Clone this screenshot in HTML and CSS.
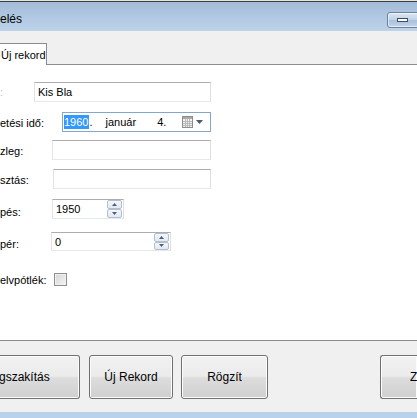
FILE: index.html
```html
<!DOCTYPE html>
<html lang="hu">
<head>
<meta charset="utf-8">
<title>Adatkezelés</title>
<link rel="stylesheet" href="styles.css">
</head>
<body>
<div class="screen">
  <div class="edge"></div>
  <div class="titlebar">
    <div class="title">elés</div>
    <div class="min-btn"><span class="dash"></span></div>
  </div>
  <div class="client">
    <div class="tabstrip">
      <div class="tab">Új rekord</div>
    </div>
    <div class="page">
      <div class="row r-name">
        <div class="lbl">:</div>
        <div class="field">Kis Bla</div>
      </div>
      <div class="row r-birth">
        <div class="lbl">etési idő:</div>
        <div class="picker">
          <span class="sel">1960</span><span>.</span><span class="month">január</span><span class="day">4.</span>
          <svg class="cal" width="11" height="12" viewBox="0 0 11 12">
            <rect x="0.5" y="0.5" width="10" height="11" fill="#f4f4f4" stroke="#8d8d8d"/>
            <rect x="1" y="1" width="9" height="2" fill="#a9a9a9"/>
            <path d="M1 5.5h9M1 7.5h9M1 9.5h9M3.5 3v8M5.5 3v8M7.5 3v8" stroke="#b9b9b9" stroke-width="1"/>
          </svg>
          <svg class="arrow" width="7" height="4" viewBox="0 0 7 4"><path d="M0 0h7L3.5 4z" fill="#4a5a70"/></svg>
        </div>
      </div>
      <div class="row r-dept">
        <div class="lbl">zleg:</div>
        <div class="field"></div>
      </div>
      <div class="row r-pos">
        <div class="lbl">sztás:</div>
        <div class="field"></div>
      </div>
      <div class="row r-entry">
        <div class="lbl">pés:</div>
        <div class="spin">
          <span class="val">1950</span>
          <div class="spinbtns">
            <div class="sb"><svg width="5" height="3" viewBox="0 0 5 3"><path d="M0 3h5L2.5 0z" fill="#4d5f7c"/></svg></div>
            <div class="sb"><svg width="5" height="3" viewBox="0 0 5 3"><path d="M0 0h5L2.5 3z" fill="#4d5f7c"/></svg></div>
          </div>
        </div>
      </div>
      <div class="row r-salary">
        <div class="lbl">pér:</div>
        <div class="spin wide">
          <span class="val">0</span>
          <div class="spinbtns">
            <div class="sb"><svg width="5" height="3" viewBox="0 0 5 3"><path d="M0 3h5L2.5 0z" fill="#4d5f7c"/></svg></div>
            <div class="sb"><svg width="5" height="3" viewBox="0 0 5 3"><path d="M0 0h5L2.5 3z" fill="#4d5f7c"/></svg></div>
          </div>
        </div>
      </div>
      <div class="row r-lang">
        <div class="lbl">elvpótlék:</div>
        <div class="check"></div>
      </div>
    </div>
    <div class="buttons">
      <div class="btn b1">gszakítás</div>
      <div class="btn b2">Új Rekord</div>
      <div class="btn b3">Rögzít</div>
      <div class="btn b4">Z</div>
    </div>
  </div>
  <div class="band"></div>
</div>
</body>
</html>
```
FILE: styles.css
```css
* { box-sizing: border-box; }
html, body { margin: 0; padding: 0; }
body {
  width: 417px;
  height: 418px;
  overflow: hidden;
  background: #f0f0f0;
  font-family: "Liberation Sans", Arial, sans-serif;
  font-size: 11px;
  color: #000;
}
.screen {
  width: 417px;
  height: 418px;
  overflow: hidden;
  display: flex;
  flex-direction: column;
}
.edge {
  height: 2px;
  flex: none;
  background: linear-gradient(#e4e4e4 0 1px, #3c3c3c 1px);
}
.titlebar {
  height: 29px;
  flex: none;
  display: flex;
  align-items: flex-start;
  background: linear-gradient(#a2bbd8, #b3cae4 60%, #bed3ea);
}
.title {
  margin-top: 10px;
  white-space: nowrap;
  font-size: 12px;
  line-height: 14px;
}
.min-btn {
  margin-left: auto;
  margin-right: -6px;
  margin-top: 10px;
  width: 36px;
  height: 16px;
  border: 1px solid #6e819b;
  border-radius: 3px;
  background: linear-gradient(#dbe6f2, #c4d5e8 45%, #aac1dc 55%, #c3d6ea);
  box-shadow: inset 0 0 0 1px rgba(255,255,255,0.55);
  display: flex;
  align-items: center;
}
.dash {
  margin-left: 9px;
  width: 11px;
  height: 4px;
  background: #fff;
  border: 1px solid #3c4c63;
}
.client {
  flex: 1;
  display: flex;
  flex-direction: column;
}
.tabstrip {
  height: 34px;
  flex: none;
  padding-top: 12px;
  border-bottom: 1px solid #898c95;
  display: flex;
}
.tab {
  margin-left: -1px;
  width: 48px;
  height: 22px;
  background: #fff;
  border: 1px solid #898c95;
  border-bottom: none;
  margin-bottom: -1px;
  display: flex;
  align-items: center;
  padding-left: 1px;
  white-space: nowrap;
}
.page {
  height: 276px;
  flex: none;
  background: #fff;
  border-bottom: 1px solid #898c95;
  display: flex;
  flex-direction: column;
}
.row {
  display: flex;
  align-items: center;
  height: 20px;
  flex: none;
}
.lbl {
  white-space: nowrap;
  flex: none;
}
.field {
  height: 20px;
  background: #fff;
  border: 1px solid;
  border-color: #abadb3 #dbdfe6 #e3e9ef #e2e3ea;
  padding-left: 3px;
  line-height: 18px;
}
.r-name { margin-top: 17px; }
.r-name .lbl { width: 34px; color: #bbb; }
.r-name .field { width: 177px; }

.r-birth { margin-top: 10px; }
.r-birth .lbl { width: 62px; padding-top: 1px; }
.picker {
  width: 149px;
  height: 20px;
  border: 1px solid #86a5cb;
  background: #fff;
  display: flex;
  align-items: center;
  padding-left: 1px;
}
.sel {
  background: #3399ff;
  color: #fff;
  line-height: 14px;
  padding-right: 1px;
}
.month { margin-left: 13px; }
.day { margin-left: 21px; }
.cal { margin-left: auto; }
.arrow { margin-left: 3px; margin-right: 7px; }

.r-dept { margin-top: 8px; }
.r-dept .lbl { width: 52px; padding-top: 2px; }
.r-dept .field { width: 159px; }

.r-pos { margin-top: 9px; }
.r-pos .lbl { width: 53px; padding-top: 2px; }
.r-pos .field { width: 158px; }

.r-entry { margin-top: 10px; }
.r-entry .lbl { width: 52px; padding-top: 6px; }
.spin {
  width: 72px;
  height: 20px;
  background: #fff;
  border: 1px solid;
  border-color: #abadb3 #dbdfe6 #e3e9ef #e2e3ea;
  display: flex;
  align-items: center;
}
.val { padding-left: 3px; line-height: 18px; }
.spinbtns {
  margin-left: auto;
  margin-right: 1px;
  width: 15px;
  height: 18px;
  display: flex;
  flex-direction: column;
}
.sb {
  flex: 1;
  border: 1px solid #b4bfce;
  border-radius: 2px;
  background: linear-gradient(#f4f7fb, #e2e9f1);
  display: flex;
  align-items: center;
  justify-content: center;
}
.r-salary { margin-top: 13px; height: 19px; }
.r-salary .lbl { width: 51px; padding-top: 4px; }
.spin.wide { width: 120px; height: 19px; }
.spin.wide .spinbtns { height: 17px; }

.r-lang { margin-top: 18px; }
.r-lang .lbl { width: 54px; padding-top: 1px; }
.check {
  width: 13px;
  height: 13px;
  border: 1px solid #8e8f8f;
  background: linear-gradient(135deg, #d6d6d6, #f4f4f4);
  box-shadow: inset 0 0 0 1px #f0f0f0;
}

.buttons {
  margin-top: 14px;
  height: 44px;
  flex: none;
  display: flex;
}
.btn {
  flex: none;
  height: 44px;
  border: 1px solid #707070;
  border-radius: 3px;
  background: linear-gradient(#f2f2f2, #ebebeb 48%, #dddddd 52%, #cfcfcf);
  box-shadow: inset 0 0 0 1px #fcfcfc;
  display: flex;
  align-items: center;
  justify-content: center;
  white-space: nowrap;
  font-size: 12px;
}
.b1 {
  margin-left: -3px;
  width: 83px;
  justify-content: flex-start;
  padding-left: 2px;
  border-left: none;
  border-radius: 0 3px 3px 0;
}
.b2 { margin-left: 9px; width: 84px; }
.b3 { margin-left: 8px; width: 87px; }
.b4 {
  margin-left: 112px;
  width: 37px;
  justify-content: flex-start;
  padding-left: 29px;
  border-right: none;
  border-radius: 3px 0 0 3px;
}
.band {
  margin-top: auto;
  height: 6px;
  flex: none;
  background: #b9d1ea;
}
```
